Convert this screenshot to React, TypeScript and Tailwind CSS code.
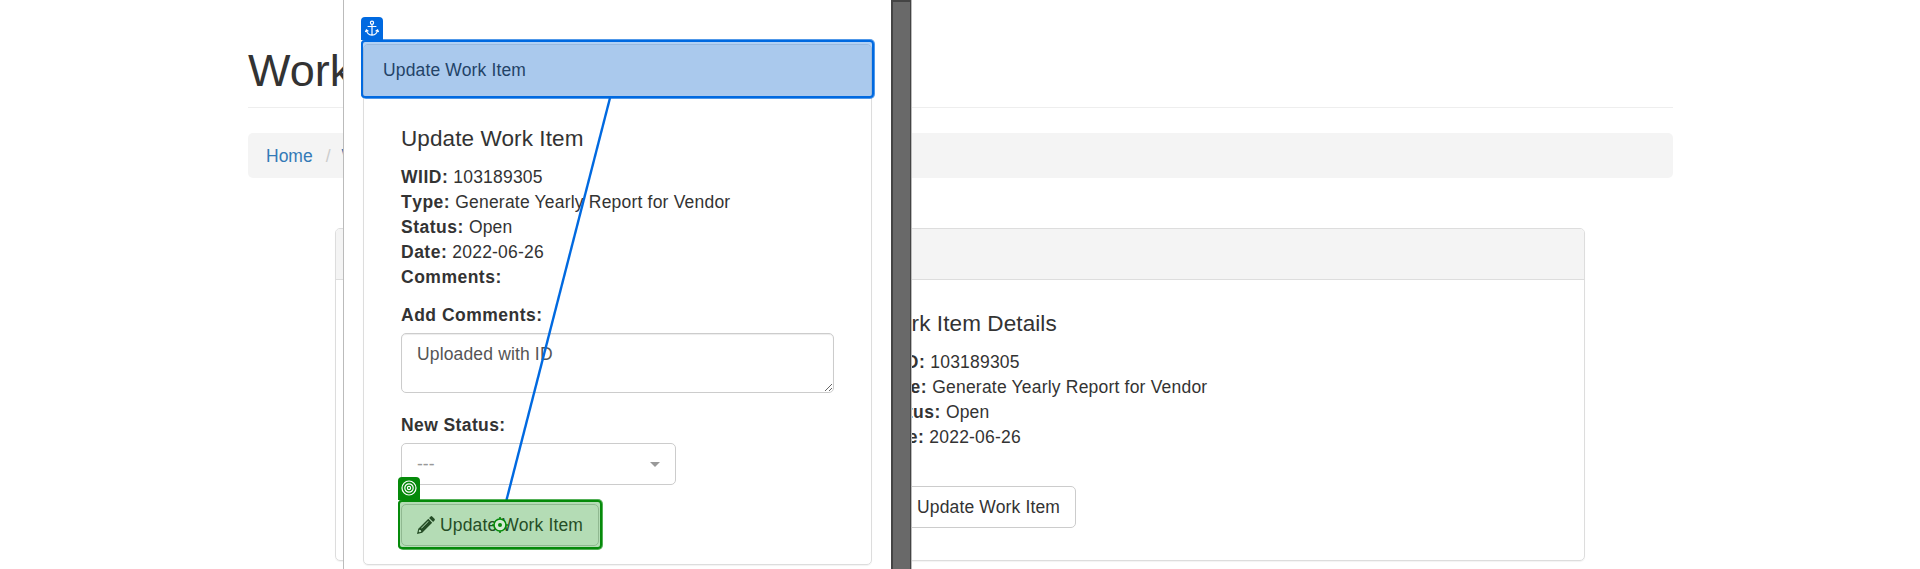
import type { ReactNode } from "react";

function Field({ label, children }: { label: string; children?: ReactNode }) {
  return (
    <div className="h-[25px] tracking-[0.2px] whitespace-nowrap">
      <strong className="font-bold tracking-[0.5px] [font-kerning:none]">{label}:</strong> {children}
    </div>
  );
}

function Pencil() {
  return (
    <svg className="mr-[5px] h-[18px] w-[18px] shrink-0" viewBox="0 0 18 18" fill="currentColor">
      <path d="M12.1 1.9 13.6.5q.8-.8 1.6 0l2.3 2.3q.8.8 0 1.6l-1.4 1.5z" />
      <path
        fillRule="evenodd"
        d="M11.3 2.8 15.2 6.7 5.2 16.7 0 18 1.3 12.8zM11.1 5.1 4.1 12.1 4.6 12.6 11.6 5.6zM2.2 13.8 1.7 15.6 2.4 16.3 4.2 15.8 3.9 14.3z"
      />
    </svg>
  );
}

function UpdateButton() {
  return (
    <button className="flex h-[42px] w-[198px] items-center rounded-[5px] border border-[#ccc] bg-white pl-[15px] tracking-[0.15px] whitespace-nowrap">
      <Pencil />
      Update Work Item
    </button>
  );
}

function MainPage() {
  return (
    <main className="ml-[248px] w-[1425px] pt-[43px]">
      <h1 className="h-[65px] border-b border-[#eee] text-[45px] leading-[55px]">Work</h1>
      <nav className="mt-[25px] flex h-[45px] items-center rounded-[5px] bg-[#f4f4f4] pt-px pl-[18px] text-[#337ab7]">
        <a>Home</a>
        <span className="mr-[11px] ml-[13px] text-[#ccc]">/</span>
        <a>Work</a>
      </nav>
      <section className="mt-[50px] ml-[87px] h-[333px] w-[1250px] rounded-[5px] border border-[#ddd] shadow-[0_1px_1px_rgba(0,0,0,0.05)]">
        <header className="h-[51px] rounded-t-[4px] border-b border-[#ddd] bg-[#f4f4f4]" />
        <div className="pt-[30px] pl-[542px]">
          <h2 className="mb-[13px] h-[27px] text-[22.5px] leading-[27px] tracking-[0.1px]">Work Item Details</h2>
          <Field label="WIID">103189305</Field>
          <Field label="Type">Generate Yearly Report for Vendor</Field>
          <Field label="Status">Open</Field>
          <Field label="Date">2022-06-26</Field>
          <div className="mt-[36px]">
            <UpdateButton />
          </div>
        </div>
      </section>
    </main>
  );
}

function UpdatePanel() {
  return (
    <aside className="absolute top-0 left-[343px] flex h-[569px] w-[569px] border-x border-[#bbb] bg-white">
      <div className="w-[547px] pt-[44px] pl-[19px]">
        <section className="h-[521px] w-[509px] rounded-[5px] border border-[#ddd] shadow-[0_1px_1px_rgba(0,0,0,0.05)]">
          <header className="flex h-[52px] items-center rounded-t-[4px] border-b border-[#ddd] bg-[#f4f4f4] pl-[19px] tracking-[0.15px]">
            Update Work Item
          </header>
          <div className="pt-[28px] pl-[37px]">
            <h2 className="mb-[13px] h-[27px] text-[22.5px] leading-[27px] tracking-[0.1px]">Update Work Item</h2>
            <Field label="WIID">103189305</Field>
            <Field label="Type">Generate Yearly Report for Vendor</Field>
            <Field label="Status">Open</Field>
            <Field label="Date">2022-06-26</Field>
            <Field label="Comments" />
            <label className="mt-[13px] block h-[30px] font-bold tracking-[0.5px]">Add Comments:</label>
            <textarea
              className="block h-[60px] w-[433px] resize rounded-[5px] border border-[#ccc] bg-white px-[15px] py-[8px] tracking-[0.15px] text-[#555] shadow-[inset_0_1px_1px_rgba(0,0,0,0.075)] outline-none"
              defaultValue="Uploaded with ID"
            />
            <label className="mt-[20px] block h-[30px] font-bold tracking-[0.4px]">New Status:</label>
            <div className="flex h-[42px] w-[275px] items-center justify-between rounded-[5px] border border-[#ccc] px-[15px] text-[#999]">
              <span>---</span>
              <span className="h-0 w-0 border-x-[5px] border-t-[5px] border-x-transparent border-t-[#999]" />
            </div>
            <div className="mt-[19px]">
              <UpdateButton />
            </div>
          </div>
        </section>
      </div>
      <div className="w-[20px] border-t-2 border-r border-l-2 border-[#444] bg-[#696969]" />
    </aside>
  );
}

function Annotations() {
  return (
    <>
      <div className="absolute top-[17px] left-[361px] flex h-[23px] w-[22px] justify-center rounded-t-[4px] bg-[#0069e0] pt-[3px] text-white">
        <svg className="h-[17px] w-[16px]" viewBox="0 0 16 17" fill="none" stroke="currentColor" strokeWidth="1.2">
          <circle cx="8" cy="2.8" r="1.6" />
          <path d="M8 4.4V15M3.6 6.5H12.4M2.4 10Q3 14.8 8 15.2Q13 14.8 13.6 10M1.4 12 2.4 9.8 4.4 11.2M11.6 11.2 13.6 9.8 14.6 12" />
        </svg>
      </div>
      <div className="absolute top-[39px] left-[361px] h-[60px] w-[514px] rounded-[5px] border border-[#0069e0]/55 bg-[#0069e0]/30" />
      <div className="absolute top-[40px] left-[361px] h-[58px] w-[513px] rounded-[4px] border-2 border-[#0069e0]" />
      <svg className="absolute top-[98px] left-[480px] h-[402px] w-[140px]" viewBox="0 0 140 402">
        <path d="M130 0 26.5 402" stroke="#0069e0" strokeWidth="2.4" />
      </svg>
      <div className="absolute top-[477px] left-[398px] flex h-[23px] w-[22px] justify-center rounded-t-[4px] bg-[#058a0a] pt-[3px] text-white">
        <svg className="h-[16px] w-[16px]" viewBox="0 0 16 16" fill="none" stroke="currentColor" strokeWidth="1.2">
          <circle cx="8" cy="8" r="7" />
          <circle cx="8" cy="8" r="4.2" />
          <circle cx="8" cy="8" r="1.6" />
        </svg>
      </div>
      <div className="absolute top-[499px] left-[398px] h-[51px] w-[205px] rounded-[5px] border border-[#058a0a]/55 bg-[#058a0a]/30" />
      <div className="absolute top-[500px] left-[398px] h-[49px] w-[204px] rounded-[4px] border-2 border-[#058a0a]" />
      <svg className="absolute top-[516px] left-[491px] h-[18px] w-[18px]" viewBox="0 0 18 18" fill="none" stroke="#058a0a" strokeWidth="1.6">
        <circle cx="9" cy="9" r="6" fill="#d3ead3" />
        <circle cx="9" cy="9" r="2" fill="#058a0a" stroke="none" />
        <path d="M9 1V3M9 15V17M1 9H3M15 9H17" />
      </svg>
    </>
  );
}

export default function App() {
  return (
    <div className="relative h-[569px] w-[1920px] overflow-hidden bg-white font-['Liberation_Sans',Arial,sans-serif] text-[17.5px] leading-[25px] text-[#333]">
      <MainPage />
      <UpdatePanel />
      <Annotations />
    </div>
  );
}
